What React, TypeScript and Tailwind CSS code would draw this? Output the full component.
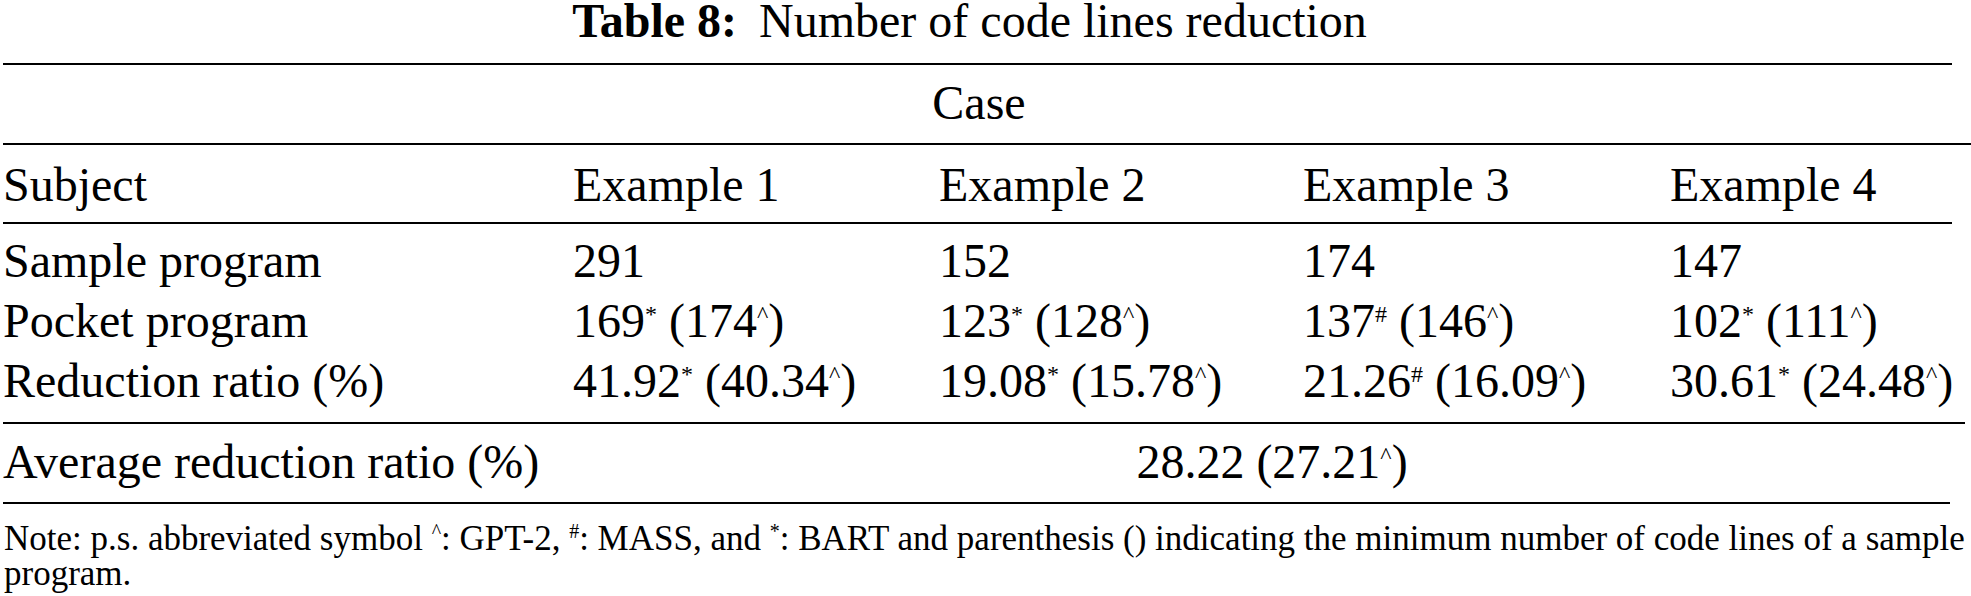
import React from "react";

const Sup = ({ c }: { c: string }) => (
  <sup className="relative top-[-15px] text-[24px] leading-none">{c}</sup>
);

const NSup = ({ c }: { c: string }) => (
  <sup className="relative top-[-12px] text-[20px] leading-none">{c}</sup>
);

const grid = "grid grid-cols-[570px_366px_364px_367px_1fr]";

type Row = { label: string; cells: React.ReactNode[] };

const rows: Row[] = [
  { label: "Sample program", cells: ["291", "152", "174", "147"] },
  {
    label: "Pocket program",
    cells: [
      <>169<Sup c="*" /> (174<Sup c="^" />)</>,
      <>123<Sup c="*" /> (128<Sup c="^" />)</>,
      <>137<Sup c="#" /> (146<Sup c="^" />)</>,
      <>102<Sup c="*" /> (111<Sup c="^" />)</>,
    ],
  },
  {
    label: "Reduction ratio (%)",
    cells: [
      <>41.92<Sup c="*" /> (40.34<Sup c="^" />)</>,
      <>19.08<Sup c="*" /> (15.78<Sup c="^" />)</>,
      <>21.26<Sup c="#" /> (16.09<Sup c="^" />)</>,
      <>30.61<Sup c="*" /> (24.48<Sup c="^" />)</>,
    ],
  },
];

export default function App() {
  return (
    <div className="w-[1971px] h-[596px] overflow-hidden bg-white text-black font-['Liberation_Serif',serif]">
      {/* Title */}
      <div className="h-[42px] pr-[32px] text-center text-[48px] leading-[42px] whitespace-nowrap">
        <span className="font-bold">Table 8:</span>
        <span className="ml-[22px]">Number of code lines reduction</span>
      </div>

      <div className="pl-[3px]">
        <div className="mt-[21px] h-[2px] w-[1949px] bg-black" />

        {/* Case */}
        <div className="mt-[8px] h-[60px] text-center text-[48px] leading-[60px] w-[1952px]">Case</div>
        <div className="mt-[10px] h-[2px] w-[1968px] bg-black" />

        {/* Header */}
        <div className={`${grid} mt-[10px] h-[60px] text-[48px] leading-[60px] whitespace-nowrap`}>
          <div>Subject</div>
          <div>Example 1</div>
          <div>Example 2</div>
          <div>Example 3</div>
          <div>Example 4</div>
        </div>
        <div className="mt-[7px] h-[2px] w-[1949px] bg-black" />

        {/* Body */}
        <div className="mt-[7px] flex flex-col">
          {rows.map((r) => (
            <div key={r.label} className={`${grid} h-[60px] text-[48px] leading-[60px] whitespace-nowrap`}>
              <div>{r.label}</div>
              {r.cells.map((c, i) => (
                <div key={i}>{c}</div>
              ))}
            </div>
          ))}
        </div>
        <div className="mt-[11px] h-[2px] w-[1962px] bg-black" />

        {/* Average */}
        <div className={`${grid} mt-[8px] h-[60px] text-[48px] leading-[60px] whitespace-nowrap`}>
          <div>Average reduction ratio (%)</div>
          <div className="col-span-4 text-center">
            28.22 (27.21<Sup c="^" />)
          </div>
        </div>
        <div className="mt-[10px] h-[2px] w-[1947px] bg-black" />

        {/* Note */}
        <div className="mt-[17px] text-[35px] leading-[35px] pl-[1px]">
          <div className="whitespace-nowrap">
            Note: p.s. abbreviated symbol <NSup c="^" />: GPT-2, <NSup c="#" />: MASS, and <NSup c="*" />: BART and
            parenthesis () indicating the minimum number of code lines of a sample
          </div>
          <div className="whitespace-nowrap">program.</div>
        </div>
      </div>
    </div>
  );
}
